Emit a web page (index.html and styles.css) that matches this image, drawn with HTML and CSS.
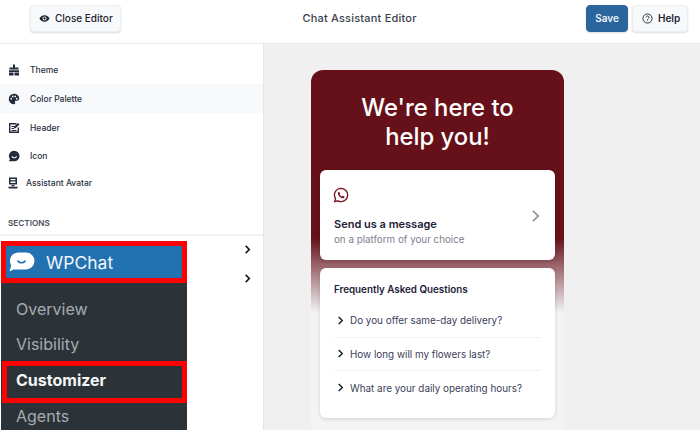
FILE: index.html
```html
<!DOCTYPE html>
<html lang="en">

<head>
    <meta charset="UTF-8">
    <title>Chat Assistant Editor</title>
    <link rel="stylesheet" href="styles.css">
</head>

<body>

    <header class="topbar">
        <button class="btn btn-close">
            <svg class="btn-icon" viewBox="0 0 24 24"><path d="M12 5C7 5 2.800 8 1 12c1.800 4 6 7 11 7s9.200-3 11-7c-1.800-4-6-7-11-7zm0 11.500a4.500 4.500 0 1 1 0-9 4.500 4.500 0 0 1 0 9zm0-7a2.500 2.500 0 1 0 0 5 2.500 2.500 0 0 0 0-5z" /></svg>
            Close Editor
        </button>
        <h1 class="topbar-title">Chat Assistant Editor</h1>
        <div class="topbar-actions">
            <button class="btn btn-save">Save</button>
            <button class="btn btn-help">
                <svg class="btn-icon" viewBox="0 0 24 24" fill="none" stroke="#1e2330" stroke-width="2"><circle cx="12" cy="12" r="10" /><path d="M9 9.500a3 3 0 1 1 4.500 2.600c-1 .6-1.500 1.200-1.500 2.400" /><path d="M12 16.500v1.500" /></svg>
                Help
            </button>
        </div>
    </header>

    <div class="editor">
        <aside class="sidebar">
            <ul class="menu">
                <li class="menu-item">
                    <svg class="menu-icon" viewBox="0 0 24 24"><path d="M10 1h4v6h7v4H3V7h7zM2 12.500h20V16H2zM2 17h9v6H2zM13 17h9v6h-9z" /></svg>
                    Theme
                </li>
                <li class="menu-item active">
                    <svg class="menu-icon" viewBox="0 0 24 24"><path fill-rule="evenodd" d="M12 1.500a10.500 10.500 0 0 0 0 21c1.500 0 2.500-1 2.500-2.300 0-1.500-1-1.800-1-3 0-1 .8-1.700 2-1.700H18c2.800 0 4.500-1.800 4.500-4.300C22.500 5.500 17.500 1.500 12 1.500zM6.500 13a1.700 1.700 0 1 1 0-3.400 1.700 1.700 0 0 1 0 3.400zm3-4.500a1.700 1.700 0 1 1 0-3.400 1.700 1.700 0 0 1 0 3.400zm5 0a1.700 1.700 0 1 1 0-3.400 1.700 1.700 0 0 1 0 3.400zm3 4.500a1.700 1.700 0 1 1 0-3.400 1.700 1.700 0 0 1 0 3.400z" /></svg>
                    Color Palette
                </li>
                <li class="menu-item">
                    <svg class="menu-icon" viewBox="0 0 24 24"><path d="M2 2h15v2.800H4.800v14.400h14.400V11H22v11H2z" /><path d="M7 8h6v2.200H7zM7 12h5v2.200H7zM7 16h10v2.200H7z" /><path d="M20 2l3 3-8 7.500h-3V9.500z" /></svg>
                    Header
                </li>
                <li class="menu-item menu-item-icon">
                    <svg class="menu-icon" viewBox="0 0 24 24"><path fill-rule="evenodd" d="M12.500 1.500a10.500 10.500 0 0 1 0 21H1.500l2.500-4A10.500 10.500 0 0 1 12.500 1.500zM7 12.500c.7 2.700 3 4 5.500 4s4.800-1.300 5.500-4l-1.900-.4c-.5 1.700-2 2.500-3.600 2.500s-3.100-.8-3.600-2.500z" /></svg>
                    Icon
                </li>
                <li class="menu-item menu-item-avatar">
                    <svg class="menu-icon" viewBox="0 0 24 24"><path fill-rule="evenodd" d="M4 1h16v14H4zM7 4v2.500h10V4zM7 9v3h10V9z" /><path d="M9 16h6v2.500H9zM2 19.500h20L20 23H4z" /></svg>
                    Assistant Avatar
                </li>
            </ul>

            <h2 class="sections-label">SECTIONS</h2>
            <div class="sections">
                <svg class="section-chevron" viewBox="0 0 10 10"><path d="M3 1l4 4-4 4" /></svg>
                <svg class="section-chevron" viewBox="0 0 10 10"><path d="M3 1l4 4-4 4" /></svg>
            </div>

            <!-- wp admin menu pasted over the sidebar -->
            <nav class="wp-menu">
                <div class="wp-head red-box">
                    <svg class="wp-logo" viewBox="0 0 26 20"><path fill="#fff" d="M9 .5h8a8.500 8.500 0 0 1 0 17H4.500L.5 19.500l1.700-6A8.500 8.500 0 0 1 9 .5z" /><path d="M9 9c1.400 2.400 5.600 2.400 7 0" fill="none" stroke="#2271b1" stroke-width="1.600" stroke-linecap="round" /></svg>
                    WPChat
                </div>
                <ul class="wp-links">
                    <li class="wp-link">Overview</li>
                    <li class="wp-link">Visibility</li>
                    <li class="wp-link wp-current red-box">Customizer</li>
                    <li class="wp-link">Agents</li>
                </ul>
            </nav>
        </aside>

        <main class="preview">
            <div class="widget">
                <h2 class="widget-title">We're here to<br>help you!</h2>

                <div class="card card-message">
                    <div>
                        <svg class="wa-icon" viewBox="0 0 24 24"><path fill="none" stroke="#7a1420" stroke-width="2" d="M12 2a10 10 0 0 1 0 20c-1.800 0-3.400-.5-4.800-1.300L2.500 22l1.300-4.600A10 10 0 0 1 12 2z" /><path fill="#7a1420" d="M9 7c-.6 0-1.700.8-1.700 2.500 0 3.500 4 7.500 7.500 7.500 1.600 0 2.500-1.200 2.500-2 0-.7-2.200-1.700-2.600-1.700-.5 0-.9 1-1.300 1-1 0-3.500-2.500-3.500-3.400 0-.5 1-.9 1-1.400C10.400 9.100 9.500 7 9 7z" /></svg>
                        <div class="card-heading">Send us a message</div>
                        <div class="card-sub">on a platform of your choice</div>
                    </div>
                    <svg class="card-chevron" viewBox="0 0 10 16"><path d="M2 2l6 6-6 6" /></svg>
                </div>

                <div class="card card-faq">
                    <h3 class="faq-title">Frequently Asked Questions</h3>
                    <ul class="faq-list">
                        <li class="faq-item"><svg class="faq-chevron" viewBox="0 0 10 10"><path d="M3 1l4 4-4 4" /></svg>Do you offer same-day delivery?</li>
                        <li class="faq-item"><svg class="faq-chevron" viewBox="0 0 10 10"><path d="M3 1l4 4-4 4" /></svg>How long will my flowers last?</li>
                        <li class="faq-item"><svg class="faq-chevron" viewBox="0 0 10 10"><path d="M3 1l4 4-4 4" /></svg>What are your daily operating hours?</li>
                    </ul>
                </div>
            </div>
        </main>
    </div>

</body>

</html>
```

FILE: styles.css
```css
* {
    margin: 0;
    padding: 0;
    box-sizing: border-box;
    font-family: 'Inter', sans-serif;
}

html,
body {
    height: 430px;
    overflow: hidden;
}

body {
    background: #fff;
    color: #1e2330;
}

ul {
    list-style: none;
}

.topbar {
    height: 44px;
    display: flex;
    align-items: center;
    justify-content: space-between;
    padding: 0 12px 7px 30px;
    background: #fff;
    border-bottom: 1px solid #e8e8ea;
}

.topbar-title {
    margin-left: 12px;
    font-size: 11px;
    font-weight: 500;
    color: #3c4250;
    letter-spacing: 0.2px;
}

.topbar-actions {
    display: flex;
    gap: 4px;
}

.btn {
    height: 27px;
    display: flex;
    align-items: center;
    gap: 5px;
    border: 1px solid #eceef1;
    border-radius: 4px;
    background: #f8f9fb;
    box-shadow: 0 1px 2px rgba(0, 0, 0, 0.14);
    font-size: 10px;
    font-weight: 500;
    color: #1e2330;
}

.btn-close {
    width: 91px;
    padding-left: 8px;
}

.btn-save {
    width: 42px;
    justify-content: center;
    background: #2b659e;
    border-color: #2b659e;
    color: #eef3f8;
    font-weight: 600;
}

.btn-help {
    width: 56px;
    padding-left: 9px;
    font-weight: 600;
}

.btn-icon {
    width: 11px;
    height: 11px;
    flex-shrink: 0;
    fill: #1e2330;
}

.btn-help .btn-icon {
    fill: none;
}

.editor {
    height: 386px;
    display: flex;
}

.sidebar {
    position: relative;
    width: 264px;
    flex-shrink: 0;
    background: #fff;
    border-right: 1px solid #e6e6e8;
    padding-top: 11px;
}

.menu-item {
    height: 29px;
    display: flex;
    align-items: center;
    gap: 10px;
    padding-left: 8px;
    font-size: 8.500px;
    font-weight: 500;
    color: #2a2f3d;
}

.menu-item.active {
    background: #f8f9fb;
}

.menu-item-icon {
    height: 28px;
}

.menu-item-avatar {
    height: 26px;
    gap: 7px;
    padding-left: 7px;
}

.menu-icon {
    width: 12px;
    height: 12px;
    flex-shrink: 0;
    fill: #252b3f;
}

.sections-label {
    margin-top: 22px;
    padding: 0 0 6px 8px;
    font-size: 8.200px;
    font-weight: 600;
    color: #4a5060;
    border-bottom: 2px solid #f1f1f2;
}

.sections {
    display: flex;
    flex-direction: column;
    align-items: flex-end;
    gap: 20px;
    padding: 9px 11px 0 0;
}

.section-chevron {
    width: 9px;
    height: 9px;
    fill: none;
    stroke: #14161c;
    stroke-width: 1.800;
}

.wp-menu {
    position: absolute;
    left: 1px;
    top: 197px;
    width: 186px;
    height: 189px;
    background: #2c3338;
}

.red-box {
    border: 5px solid #fe0000;
}

.wp-head {
    height: 42px;
    display: flex;
    align-items: center;
    gap: 11px;
    padding-left: 3px;
    background: #2271b1;
    font-size: 17.500px;
    color: #f2f6fa;
}

.wp-logo {
    width: 26px;
    height: 20px;
}

.wp-links {
    padding-top: 8px;
}

.wp-link {
    height: 35.500px;
    display: flex;
    align-items: center;
    padding-left: 15px;
    font-size: 16px;
    color: #a7abb0;
}

.wp-current {
    height: 42px;
    margin: -1px 0 -5px 1px;
    padding: 0 0 4px 9px;
    font-weight: 700;
    color: #f4f5f6;
}

.preview {
    flex: 1;
    background: #f0f0f1;
    padding-top: 26px;
    padding-left: 47px;
}

.widget {
    width: 253px;
    height: 360px;
    padding: 0 9px;
    border-radius: 12px 12px 0 0;
    background: linear-gradient(to bottom, #66111a 0, #66111a 168px, #f3f4f6 243px);
}

.widget-title {
    padding-top: 24px;
    height: 100px;
    text-align: center;
    font-size: 23.800px;
    line-height: 28.500px;
    font-weight: 500;
    color: #fff;
}

.card {
    background: #fff;
    border-radius: 6px;
    box-shadow: 0 1px 4px rgba(0, 0, 0, 0.14);
}

.card-message {
    height: 90px;
    display: flex;
    align-items: center;
    justify-content: space-between;
    padding: 1px 15px 0 14px;
}

.wa-icon {
    display: block;
    width: 16px;
    height: 16px;
    margin: 0 0 14px -1px;
}

.card-heading {
    font-size: 11px;
    font-weight: 600;
    color: #1c2138;
}

.card-sub {
    margin-top: 3px;
    font-size: 9.800px;
    color: #7b7f8e;
}

.card-chevron {
    width: 9px;
    height: 14px;
    fill: none;
    stroke: #8a8d9c;
    stroke-width: 2;
}

.card-faq {
    height: 150px;
    margin-top: 8px;
    padding: 16px 14px 0;
}

.faq-title {
    font-size: 9.800px;
    font-weight: 600;
    color: #1c2138;
}

.faq-list {
    margin-top: 9px;
}

.faq-item {
    height: 33.500px;
    display: flex;
    align-items: center;
    gap: 5px;
    padding-left: 2px;
    font-size: 9.900px;
    color: #3c4058;
    border-bottom: 1px solid #f2f2f4;
}

.faq-item:last-child {
    border-bottom: none;
}

.faq-chevron {
    width: 9px;
    height: 9px;
    flex-shrink: 0;
    fill: none;
    stroke: #14161c;
    stroke-width: 1.500;
}
```
